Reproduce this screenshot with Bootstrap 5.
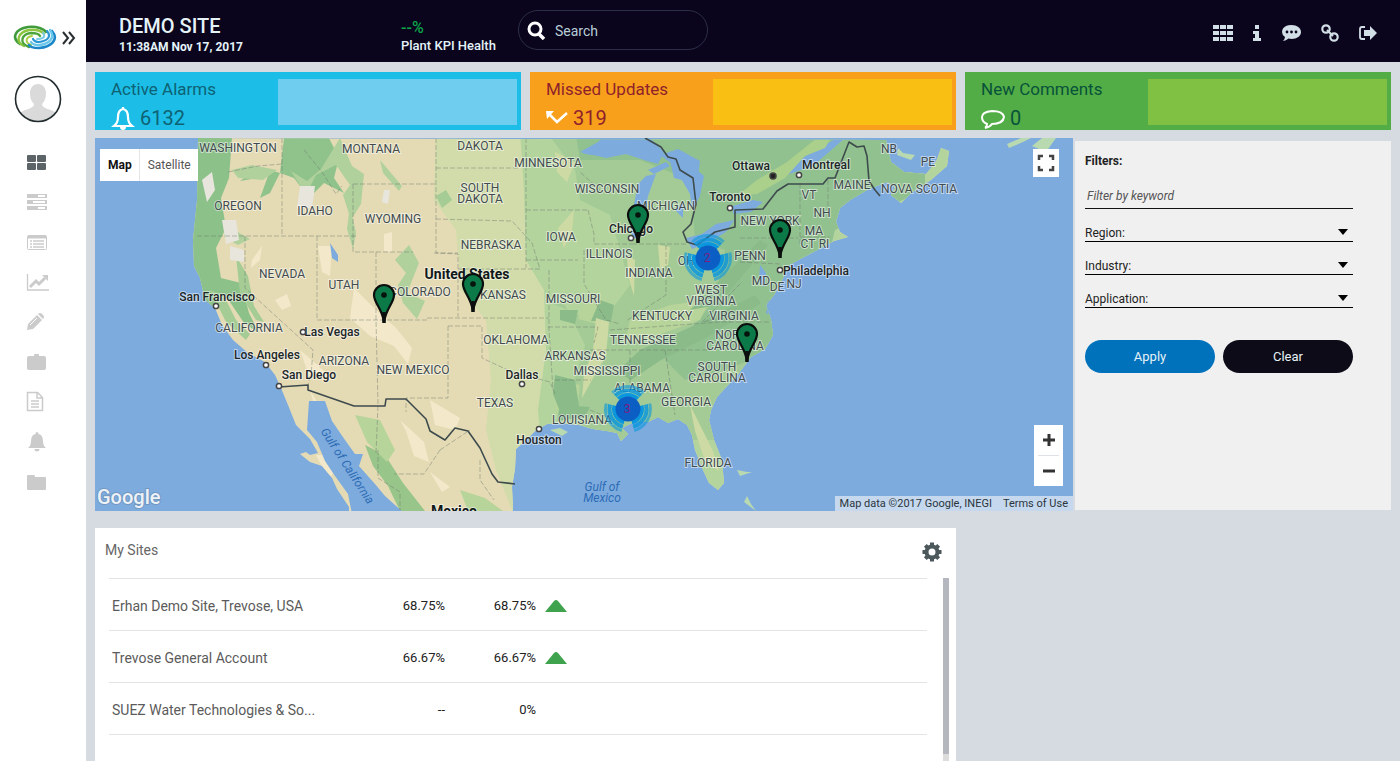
<!DOCTYPE html>
<html lang="en">
<head>
<meta charset="utf-8">
<meta name="viewport" content="width=device-width, initial-scale=1">
<title>Demo Site dashboard</title>
<link href="https://cdn.jsdelivr.net/npm/bootstrap@5.3.0/dist/css/bootstrap.min.css" rel="stylesheet">
<script src="https://cdn.jsdelivr.net/npm/bootstrap@5.3.0/dist/js/bootstrap.bundle.min.js" defer></script>
<style>
  body { font-family: Roboto, "Liberation Sans", sans-serif; font-size: 13px; line-height: 20px; background: #d5dbe0; color: #222; }
  svg { display: block; flex: none; }
  .side { width: 86px; background: #fff; }
  .brandbar { height: 75px; padding-left: 13px; gap: 5px; }
  .avatar { width: 48px; height: 48px; margin-left: 14px; margin-bottom: 19px; }
  .side-link { height: 40px; padding-left: 26px; color: #cbcbcb; }
  .side-link.active { color: #5d6468; }
  .topbar { height: 62px; background: #0a041c; color: #e4f3f8; font-weight: 500; }
  .site-block { width: 315px; padding: 10px 0 0 33px; }
  .site-name { font-size: 20px; line-height: 22px; }
  .site-sub { line-height: 20px; }
  .site-date { font-size: 12px; font-weight: 700; }
  .kpi-block { width: 117px; padding-top: 14px; }
  .kpi-value { font-size: 16px; line-height: 16px; color: #0aa54a; }
  .search { width: 190px; height: 40px; border: 1px solid #2b3048; padding-left: 8px; gap: 9px; margin-bottom: 3px; }
  .search input { font-size: 14px; color: #b9cfd8; margin-top: 3px; }
  .search input::placeholder { color: #b9cfd8; opacity: 1; }
  .top-icons { padding-right: 22px; color: #d3dfe6; gap: 18px; padding-top: 4px; }
  .content { padding: 10px 9px 0; }
  .tiles { display: grid; grid-template-columns: repeat(3, 1fr); gap: 9px; }
  .tile { height: 58px; }
  .tile-text { width: 43%; padding: 6px 0 0 16px; }
  .tile-title { font-size: 17px; line-height: 22px; }
  .tile-num { font-size: 20px; line-height: 24px; margin-top: 6px; gap: 5px; }
  .tile-box { margin: 7px 4px 5px 0; }
  .alarms { background: #1cbde7; color: #0e6273; } .alarms .tile-box { background: #6fcdef; }
  .missed { background: #f8a01c; color: #8f1f2b; } .missed .tile-box { background: #f9c013; }
  .comments { background: #53ad46; color: #07523a; } .comments .tile-box { background: #80c143; }
  .map-row { margin-top: 8px; gap: 2px; }
  .map-wrap { height: 373px; background: #7dabde; min-width: 0; }
  .map-svg { width: 100%; height: 100%; }
  .map-svg text { fill: #414b4e; stroke: #fff; stroke-opacity: .5; stroke-width: 2px; paint-order: stroke; font-size: 12px; text-anchor: middle; font-weight: 400; }
  .map-svg .city text { fill: #1d2628; font-size: 12px; font-weight: 500; }
  .map-svg .sea text { fill: #2d6cb5; stroke: none; font-style: italic; font-size: 12px; }
  .map-svg .country text { fill: #10181a; font-size: 14px; font-weight: 700; }
  .map-svg .count text { fill: #7a2080; stroke: none; font-size: 12px; }
  .map-svg .glogo { fill: #fff; fill-opacity: .9; stroke: #6d8fb4; stroke-opacity: .7; font-size: 20px; text-anchor: start; font-weight: 500; }
  .map-type { left: 5px; top: 11px; height: 32px; }
  .map-type button { background: #fff; border: 0; font-size: 12px; padding: 0 7px 0 8px; color: #555; }
  .map-type .active { font-weight: 700; color: #111; border-right: 1px solid #e5e5e5; }
  .map-btn { background: #fff; border: 0; padding: 0; display: flex; align-items: center; justify-content: center; }
  .map-full { right: 14px; top: 11px; width: 26px; height: 28px; }
  .map-zoom { right: 10px; bottom: 25px; width: 29px; background: #fff; }
  .map-zoom button { width: 29px; height: 30px; }
  .map-credit { right: 0; bottom: 0; height: 15px; line-height: 15px; background: #c5d8ee; font-size: 11px; gap: 11px; padding: 0 5px; color: #2b353c; }
  .map-credit a { color: inherit; text-decoration: none; }
  .filters { width: 316px; margin: 3px 0 1px; padding: 10px 38px 0 10px; background: #f0f0f0; font-size: 12px; }
  .filters .keyword { font-size: 12px; font-style: italic; border-bottom: 1px solid #111; padding: 0 2px 3px; margin-top: 14px; height: 24px; }
  .filters .keyword::placeholder { color: #555; opacity: 1; }
  .pick { height: 33px; border-bottom: 1px solid #000; padding-top: 14px; line-height: 20px; }
  .pick select { appearance: none; border: 0; height: 18px; background: url("data:image/svg+xml,%3Csvg xmlns='http://www.w3.org/2000/svg' width='10' height='6'%3E%3Cpath d='M0 0h10L5 6z' fill='%23000'/%3E%3C/svg%3E") no-repeat right 5px center; }
  .pill { height: 33px; border: 0; border-radius: 17px; color: #e6f1f6; font-size: 13px; }
  .pill-apply { background: #0072bc; } .pill-clear { background: #0d0b18; }
  .sites { grid-column: span 2; background: #fff; padding: 10px 7px 0 14px; }
  .lower { margin-top: 17px; }
  .sites h2 { font-size: 14px; line-height: 24px; color: #666; font-weight: 400; margin: 0 0 0 -4px; }
  .gear { margin-right: 7px; color: #4c585c; }
  .sites-head { height: 40px; }
  .site-table { border-top: 1px solid #e2e4e5; margin: 0; }
  .site-table td { height: 52px; padding: 2px 3px 0; border-bottom: 1px solid #e2e4e5; vertical-align: middle; }
  .site-table td:first-child { color: #5b5b5b; font-size: 14px; width: 248px; }
  .site-table .c-a { width: 91px; } .site-table .c-b { width: 91px; }
  .site-table td:last-child { padding-left: 5px; }
  .track { width: 6px; margin-left: 16px; background: #dcdcdc; }
  .thumb { height: 176px; background: #b4b7bd; }
</style>
</head>
<body>
<div class="d-flex min-vh-100">
  <nav class="side flex-shrink-0 d-flex flex-column" aria-label="Main">
    <div class="brandbar d-flex align-items-center">
      <svg width="44" height="26" viewBox="0 0 44 26" fill="none" stroke-linecap="round">
        <path d="M7 19C-2 13 2 4 15 2c9-1 16 2 18 5" stroke="#3f9b3b" stroke-width="2.600"/>
        <path d="M11 21C1 16 6 7 16 5c7-1 13 1 15 4" stroke="#8cc63f" stroke-width="2.400"/>
        <path d="M16 22C5 18 9 9 18 8c5 0 8 1 9 3" stroke="#4da53c" stroke-width="2.400"/>
        <path d="M18 20c-7-3-5-8 1-9" stroke="#a8cf45" stroke-width="2"/>
        <path d="M39 6c7 8 0 16-13 17-6 0-9-1-10-3" stroke="#1b87c9" stroke-width="2.600"/>
        <path d="M37 5c6 8-1 14-11 15-4 0-7-1-8-3" stroke="#6cc8ea" stroke-width="2.400"/>
        <path d="M34 6c5 6 0 10-8 11-3 0-5-1-6-3" stroke="#2a96d2" stroke-width="2.200"/>
        <path d="M30 8c3 4 0 6-6 6" stroke="#7ccbe8" stroke-width="2"/>
      </svg>
      <svg width="14" height="14" viewBox="0 0 14 14" fill="none" stroke="#2a2f31" stroke-width="2"><path d="M1 1l5 6-5 6M7 1l5 6-5 6"/></svg>
    </div>
    <svg class="avatar" viewBox="0 0 48 48"><defs><clipPath id="av"><circle cx="24" cy="24" r="22"/></clipPath></defs><g clip-path="url(#av)" fill="#dadada"><path d="M24 9c5 0 8 4 8 9 0 6-2 9-4 11 0 5 10 5 14 9v10H6V38c4-4 14-4 14-9-2-2-4-5-4-11 0-5 3-9 8-9z"/></g><circle cx="24" cy="24" r="22.500" fill="none" stroke="#222b2d" stroke-width="1.600"/></svg>
    <a href="#" class="side-link active d-flex align-items-center" aria-label="Dashboard"><svg width="21" height="20" fill="currentColor"><rect x="1" y="3" width="9" height="7" rx="1"/><rect x="11" y="3" width="9" height="7" rx="1"/><rect x="1" y="11" width="9" height="7" rx="1"/><rect x="11" y="11" width="9" height="7" rx="1"/></svg></a>
    <a href="#" class="side-link d-flex align-items-center" aria-label="Servers"><svg width="22" height="20"><g fill="currentColor"><rect x="1" y="2" width="20" height="4"/><rect x="1" y="8" width="20" height="4"/><rect x="1" y="14" width="20" height="4"/></g><g fill="#fff"><path d="M12 3h7v2h-7zM7 9h12v2H7zM12 15h7v2h-7z"/></g></svg></a>
    <a href="#" class="side-link d-flex align-items-center" aria-label="Lists"><svg width="22" height="20" fill="none" stroke="currentColor"><rect x="1.500" y="3.500" width="19" height="14" rx="1"/><path d="M2 5h18" stroke-width="3"/><path d="M4 9h2M4 12h2M4 15h2M7 9h11M7 12h11M7 15h11" stroke-width="1.300"/></svg></a>
    <a href="#" class="side-link d-flex align-items-center" aria-label="Charts"><svg width="24" height="20" fill="none" stroke="currentColor"><path d="M1.500 2v16H23" stroke-width="1.300"/><path d="M4 15l6-6 3 3 6-6" stroke-width="3"/><path d="M16 3h6v6z" fill="currentColor" stroke="none"/></svg></a>
    <a href="#" class="side-link d-flex align-items-center" aria-label="Edit"><svg width="20" height="20" fill="currentColor"><path d="M1 18l1-6L11 3l5 5-9 9zM12 2q2-2 4 0l1 1q2 2 0 4z"/><path d="M4 13l7-7" stroke="#fff"/></svg></a>
    <a href="#" class="side-link d-flex align-items-center" aria-label="Work"><svg width="22" height="20" fill="currentColor"><path d="M8 4V3q0-1 1-1h3q1 0 1 1v1h5q2 0 2 2v10q0 2-2 2H3q-2 0-2-2V6q0-2 2-2z"/></svg></a>
    <a href="#" class="side-link d-flex align-items-center" aria-label="Reports"><svg width="20" height="22" fill="none" stroke="currentColor" stroke-width="1.500"><path d="M1.500 1.500h10l5 5v13h-15zM11 2v5h5M5 10h8M5 13h8M5 16h8"/></svg></a>
    <a href="#" class="side-link d-flex align-items-center" aria-label="Alerts"><svg width="22" height="22" viewBox="0 0 22 22" fill="currentColor"><path d="M11 1q1.500 0 1.500 2Q17 4 17 10q0 5 3 7H2q3-2 3-7 0-6 4.500-7Q9.500 1 11 1zM8.500 18h5a2.500 2.500 0 0 1-5 0z"/></svg></a>
    <a href="#" class="side-link d-flex align-items-center" aria-label="Files"><svg width="22" height="20" fill="currentColor"><path d="M1 4q0-1 1-1h6q1 0 1 2h10q1 0 1 1v11q0 1-1 1H2q-1 0-1-1z"/></svg></a>
  </nav>

  <div class="flex-grow-1 d-flex flex-column" style="min-width:0">
    <header class="topbar d-flex align-items-center">
      <div class="site-block">
        <div class="site-name">DEMO SITE</div>
        <div class="site-sub site-date">11:38AM Nov 17, 2017</div>
      </div>
      <div class="kpi-block">
        <div class="kpi-value">--%</div>
        <div class="site-sub text-nowrap">Plant KPI Health</div>
      </div>
      <form class="search rounded-pill d-flex align-items-center" role="search">
        <svg width="19" height="20" fill="none" stroke="#fff"><circle cx="8" cy="9" r="6" stroke-width="3"/><path d="M12 14l5 5" stroke-width="3.500"/></svg>
        <input class="form-control-plaintext p-0" type="search" placeholder="Search" aria-label="Search">
      </form>
      <div class="top-icons d-flex align-items-center ms-auto">
        <a href="#" class="text-reset" aria-label="Apps"><svg width="20" height="16" fill="currentColor"><path d="M0 0h6v4H0zM7 0h6v4H7zM14 0h6v4h-6zM0 6h6v4H0zM7 6h6v4H7zM14 6h6v4h-6zM0 12h6v4H0zM7 12h6v4H7zM14 12h6v4h-6z"/></svg></a>
        <a href="#" class="text-reset" aria-label="Info"><svg width="12" height="16" fill="currentColor"><path d="M4 0h4v4H4zM2 6h6v7h2v3H2v-3h2V9H2z"/></svg></a>
        <a href="#" class="text-reset" aria-label="Comments"><svg width="21" height="18" viewBox="0 0 21 18"><path d="M10.500 1C16 1 20 4 20 8s-4 7-9.500 7q-1.500 0-3-.4Q5 17 2 17q2-2 2-4-3-2-3-5 0-4 4-6 2-1 5.500-1z" fill="currentColor"/><g fill="#0a041c"><circle cx="6" cy="8" r="1.400"/><circle cx="10.500" cy="8" r="1.400"/><circle cx="15" cy="8" r="1.400"/></g></svg></a>
        <a href="#" class="text-reset" aria-label="Links"><svg width="20" height="20" fill="none" stroke="currentColor" stroke-width="2.200"><circle cx="6" cy="6" r="3.700"/><circle cx="14" cy="14" r="3.700"/><path d="M7 7l6 6" stroke-width="2"/></svg></a>
        <a href="#" class="text-reset" aria-label="Sign out"><svg width="20" height="16" viewBox="0 0 20 16"><path d="M7 2H4Q2 2 2 4v8q0 2 2 2h3" fill="none" stroke="currentColor" stroke-width="1.800"/><path d="M6 5h6V1l7 7-7 7v-4H6z" fill="currentColor"/></svg></a>
      </div>
    </header>

    <main class="content flex-grow-1 d-flex flex-column">
      <div class="tiles">
        <section class="tile alarms d-flex">
          <div class="tile-text"><div class="tile-title">Active Alarms</div>
            <div class="tile-num d-flex align-items-center"><svg width="24" height="24" viewBox="0 0 24 24" fill="none" stroke="#fff" stroke-width="2.200"><path d="M12 3q5 1 5 8 0 6 4 9H3q4-3 4-9 0-7 5-8zM12 1v2"/><path d="M9 21h6q0 3-3 3t-3-3z" fill="#fff" stroke="none"/></svg><span>6132</span></div></div>
          <div class="tile-box flex-grow-1"></div>
        </section>
        <section class="tile missed d-flex">
          <div class="tile-text"><div class="tile-title">Missed Updates</div>
            <div class="tile-num d-flex align-items-center"><svg width="22" height="14" viewBox="0 0 22 14" fill="none" stroke="#fff" stroke-width="2.500"><path d="M3 3l8 8L21 2"/><path d="M0 0h8L1 8z" fill="#fff" stroke="none"/></svg><span>319</span></div></div>
          <div class="tile-box flex-grow-1"></div>
        </section>
        <section class="tile comments d-flex">
          <div class="tile-text"><div class="tile-title">New Comments</div>
            <div class="tile-num d-flex align-items-center"><svg width="24" height="22" viewBox="0 0 24 22" fill="none" stroke="#fff" stroke-width="2"><path d="M6 17q-5-2-5-7 0-5 10-6 11 0 12 6-1 7-12 7-2 3-7 4 2-1 2-4z"/></svg><span>0</span></div></div>
          <div class="tile-box flex-grow-1"></div>
        </section>
      </div>

      <div class="map-row d-flex">
        <div class="map-wrap flex-grow-1 position-relative overflow-hidden">
          <svg class="map-svg" viewBox="95 138 978 373" preserveAspectRatio="xMidYMid slice" role="img" aria-label="Map of plant sites">
            <defs>
              <clipPath id="land"><path d="M198 138l-1 62-4 40 1 26 6 12 5 22 10 8 7 17 11 15 15 13 17 9 10 13 6 13 7 17 8 20 14 14 8 14-8 2-4-3-6 2 10 8 12 4 10 12 5 11 12 18V520H513V507l-1-20 3-18 1-20 9-8 10-10 12-7 16-1 16 2 14 4 14 2 10 2 4 8 7-7-6-6 12-6h14l10-5 10 6 10-4 9 6 5 10 3 15 8 20 6 13 9 7 6-7-2-23-8-20-5-20 2-10 6-13 11-12 11-12 12-16 14-8 8-14-2-15-5-15 8-10 8-15 7-15 15-8 15-8 15-8 14-4-8-5-4-10 4-14 10-8 17-10 20-8 8 5-4 8 10 8 10-10 20-13 16-14 2-15-8-3-5 14-10 12-22-2-13-10-3-12-2-10z"/></clipPath>
              <g id="pin"><path d="M0 0C-2-14-10-19-10-27a10 10 0 0 1 20 0C10-19 2-14 0 0z" fill="#0b7a48" stroke="#0a0e0c" stroke-width="2.200"/><path d="M0 1v-11" stroke="#0a0e0c" stroke-width="3.500"/><circle cy="-27" r="2.800" fill="#06120c"/></g>
              <g id="cluster"><g fill="none" stroke="#0a97dd" stroke-width="4" stroke-dasharray="88 32" transform="rotate(-134)"><circle r="14" pathLength="360"/><circle r="18.500" pathLength="360" stroke-opacity=".85"/><circle r="22.500" pathLength="360" stroke-opacity=".6" stroke-width="3"/></g><circle r="12.500" fill="#0b5fc4"/></g>
            </defs>
            <g clip-path="url(#land)">
              <rect x="90" y="130" width="990" height="390" fill="#e4dbb5"/>
              <path d="M436 130l-2 70 22 30 5 60 25 30 5 60-5 50 10 40 20 50h60V130z" fill="#d1dcaa"/>
              <path d="M520 130l4 60 2 70 18 30 2 60-8 60 10 110H1000V130z" fill="#b3d49d"/>
              <path d="M545 300l20 5 20 40-15 50 10 45h250V300L790 240l80-50 100-60H545l30 40 5 30 30 15 20 70-30 40z" fill="#a4cb96"/>
              <path d="M575 130h350v60l-90 40-10 40-40 30-10 50-50 20-40 10-20-20 50-60 10-50-30-10-5-60-50-20-60 0z" fill="#92c190"/>
              <path d="M192 138h40l-3 40-8 20 5 30-10 20 5 30 20 5 8 30 10 20-15-10-20-30-12 20-20-20z" fill="#8cc18a"/>
              <path d="M284 138h45l10 20-5 20 10 15-20-10-15 15-15-20-14-5-10 20-10 5 8-22-28 5 20-14 20 6z" fill="#8fc38b"/>
              <path d="M232 170l20-5 25 5-14 10-25-2zM340 138l12 28 12 8-3 30-10 16-8-25 7-10-14-20-20 10-10 20-15-24 16 10 14-12zM225 225l25 14-12 6-14-8zM350 205l6 28-3 16-6-20zM395 260l14-15 10 18-12 30 18 8-8 18-14-16-5-18 8-12zM380 160l22 26-3 5-16-18z" fill="#b0d09c"/>
              <path d="M210 290l14 6 12 24 14 14-4 6-20-18zM236 256l12 20 6 30 10 16-8-2-16-26zM436 196l10-6 6 10-10 8z" fill="#a4cc94"/>
              <path d="M365 445l20 10 18 28 22 28h-25l-12-25-15-20z" fill="#98c58a"/>
              <path d="M355 415l25 5 15 30-8 12-20-20zM460 490l25 8 18 13h-35zM560 380l20 5-3 24-22 2zM585 300l16 4-3 20-20-5zM630 320l40-15 40-5-10 20-50 18-25 5z" fill="#b7d49a"/>
              <path d="M555 375l20 5 4 26-18 8-8-20zM600 300l14 5-3 16-20 0zM560 310l18 0-3 14-15-4zM560 405l30 2-5 10-28 4zM640 350l55-25 60-30 6 8-55 35-45 22-30 20-14-8zM690 310l70-70 8 5-50 60z" fill="#8abb89"/>
              <path d="M300 186l15 0-3 22-15 0zM202 180l10-8 3 18-8 12zM222 220l14 0 3 20-13 4zM230 246l14 4 0 12-14-2zM384 190l6 0-2 14-6-2z" fill="#e8e6dc"/>
              <path d="M318 246l14 0-2 30-8-4zM252 260l10-14-2 14-9 8zM354 288l18 18 24 22 16 20-4 16-14-18-24-10-20-18zM275 300l12-6 4 12-9 4zM384 234l8-2 0 20-8-1zM310 390l12 20 2 16-8-14zM430 400l30 18-5 12-20-5zM400 420l24 22 5 20-15-6-8-25zM325 405l8 20 14 18 6 14-18-20zM316 455l12 0 7 12-4 10-10-12zM430 472l20 15-8 5zM300 350l14 12 20 18-25-4z" fill="#f3e9ca"/>
              <path d="M596 318l13 4-3 34-14 24-10 18 2-24 9-24zM658 245l12 2-2 18-8 4zM558 228l16-18-2 22-8 16zM555 152l20 10-8 20-10-10zM627 255l8 5-1 36-6-20zM690 405l8 16 15 30 6 20-14-10-10-30z" fill="#cedaa4"/>
              <g fill="#7dabde">
                <path d="M309 401l16 0 7 20 13 19 10 14 8 0-4 12 16 18 10 12 20 18H352l-4-20-13-18-10-15-8-19-10-12z"/>
                <path d="M580 152l18-10 4-4h48l14 14-6 12-14-4-18-6-20 4-8-2-12-2zM660 155l18-6 22 12-2 15-12 10-14-22z"/>
                <path d="M638 184l8-8 10-2-8 22-4 22-4 20-8 0-1-18zM670 160l20 4 14 12-4 20-8 14-2-16-8-14-8-2zM686 238l16-4 14-10 18-4-8 12-20 12-14 5zM733 206l20-6 10 2-12 10-18 2zM648 170l18-8 4 4-16 8zM675 210l8-8 0 16zM773 180l14-14 26-14 24-14h8l-32 28-30 10z"/>
                <path d="M330 243l8 12 0 7-6-4zM760 265l6 8-2 14-5-6zM768 300l6 12-8 2z"/>
              </g>
              <path d="M785 178l20-22 20-8 6-10-14 0-30 24-30 18-20 16 20-2z" fill="#abd08c"/>
              <g fill="none" stroke="#6d766c" stroke-opacity=".45" stroke-dasharray="5 2">
                <path d="M228 172l30-6 24-2M282 138v98M197 236h160M245 236v52l68 62-2 26M317 236v84h110M353 184h84M353 184v68h60M436 138v115l22 1v63M376 252v68l2 84-2 50M434 253h24M436 168h84M436 219l76 2 20 22 8 26h-82M427 318h122M448 326v72h-42v14M448 326h34v32l30 14 38 10 5 12M526 138v130M526 210h62M526 260h52M549 270v60l4 60M548 327h50l-4 16M588 210l6 24 0 10h38M584 250v34l22 36 14 4M600 190l-20-18M632 244h56M666 245v50l-40 26M610 330l110-8 50 0M590 350h120M630 350v66M665 350l10 65M555 380h36M590 410l30 12M800 183v62M828 180v30M800 237h30M740 238h58M740 262l40 2M750 312l-48 10 40-40M310 376l-2 10M378 450v28l22 14 0 18M440 450l-16 24h-30M440 450l30-20M480 460l0 20 14 20"/>
                <path d="M304 150l18 22 14 22 6-8"/>
              </g>
            </g>
            <path d="M898 148l5 5 12 2-4 5-14-5zM1009 148l14-6 8-4-10 0-14 6zM1032 146l10-8h14l-10 14zM737 470l10 2 5 0-12 4zM744 502l3-6 4 8 5 7zM550 430l10-2 8 4-6 4z" fill="#b9d9b0"/>
            <g fill="none" stroke="#3e4b4d" stroke-width="1.600" stroke-linejoin="round">
              <path d="M645 138l16 9 7 10 8 2 4 11 13 8 3 26-5 20-8 8 4 10 10 3 18-13 20-5v-17l28-1 14-18 11-7h35l5-6 7 0 14-36 8 5 7-1 3 10 2 25 6 9 5 6"/>
              <path d="M279 387l29-2v5l46 16h31l1-7h20l20 20 4 12 15 9 10-12 13 3 12 17 12 26 6 8 17 2"/>
            </g>
            <g>
              <text x="238" y="152">WASHINGTON</text><text x="371" y="153">MONTANA</text><text x="480" y="150">DAKOTA</text><text x="548" y="167">MINNESOTA</text>
              <text x="238" y="210">OREGON</text><text x="315" y="215">IDAHO</text><text x="393" y="223">WYOMING</text><text x="480" y="192">SOUTH</text><text x="480" y="203">DAKOTA</text>
              <text x="607" y="193">WISCONSIN</text><text x="666" y="210">MICHIGAN</text><text x="561" y="241">IOWA</text><text x="491" y="249">NEBRASKA</text><text x="609" y="258">ILLINOIS</text>
              <text x="649" y="277">INDIANA</text><text x="282" y="278">NEVADA</text><text x="344" y="289">UTAH</text><text x="420" y="296">COLORADO</text><text x="503" y="299">KANSAS</text><text x="573" y="303">MISSOURI</text>
              <text x="249" y="332">CALIFORNIA</text><text x="344" y="365">ARIZONA</text><text x="413" y="374">NEW MEXICO</text><text x="516" y="344">OKLAHOMA</text><text x="575" y="360">ARKANSAS</text>
              <text x="662" y="320">KENTUCKY</text><text x="734" y="320">VIRGINIA</text><text x="643" y="344">TENNESSEE</text><text x="607" y="375">MISSISSIPPI</text><text x="642" y="392">ALABAMA</text><text x="686" y="406">GEORGIA</text>
              <text x="495" y="407">TEXAS</text><text x="582" y="424">LOUISIANA</text><text x="708" y="467">FLORIDA</text><text x="711" y="294">WEST</text><text x="711" y="305">VIRGINIA</text><text x="735" y="339">NORTH</text><text x="735" y="350">CAROLINA</text>
              <text x="717" y="371">SOUTH</text><text x="717" y="382">CAROLINA</text><text x="692" y="265">OHIO</text><text x="750" y="260">PENN</text><text x="770" y="225">NEW YORK</text><text x="809" y="199">VT</text><text x="822" y="217">NH</text><text x="814" y="235">MA</text><text x="808" y="248">CT</text><text x="824" y="248">RI</text>
              <text x="761" y="285">MD</text><text x="777" y="291">DE</text><text x="794" y="288">NJ</text><text x="852" y="189">MAINE</text><text x="889" y="153">NB</text><text x="928" y="166">PE</text><text x="919" y="193">NOVA SCOTIA</text>
            </g>
            <g class="city">
              <text x="217" y="301">San Francisco</text><text x="332" y="336">Las Vegas</text><text x="267" y="359">Los Angeles</text><text x="309" y="379">San Diego</text><text x="522" y="379">Dallas</text><text x="539" y="444">Houston</text>
              <text x="631" y="233">Chicago</text><text x="730" y="201">Toronto</text><text x="751" y="170">Ottawa</text><text x="826" y="169">Montreal</text><text x="816" y="275">Philadelphia</text>
              <g fill="#fff" stroke="#444" stroke-width="1.500"><circle cx="216" cy="306" r="2.600"/><circle cx="303" cy="332" r="2.600"/><circle cx="266" cy="365" r="2.600"/><circle cx="279" cy="386" r="2.600"/><circle cx="522" cy="384" r="2.600"/><circle cx="539" cy="429" r="2.600"/><circle cx="631" cy="238" r="2.600"/><circle cx="730" cy="208" r="2.600"/><circle cx="799" cy="175" r="2.600"/><circle cx="780" cy="270" r="2.600"/><circle cx="773" cy="176" r="3" fill="#222"/></g>
            </g>
            <g class="sea"><text x="602" y="491">Gulf of</text><text x="602" y="502">Mexico</text><text transform="translate(344 468) rotate(57)">Gulf of California</text></g>
            <g class="country"><text x="467" y="279">United States</text><text x="454" y="516">Mexico</text></g>
            <use href="#cluster" x="708" y="258"/><use href="#cluster" x="628" y="409"/>
            <g class="count"><text x="707" y="262">2</text><text x="627" y="413">3</text></g>
            <use href="#pin" x="638" y="242"/><use href="#pin" x="780" y="257"/><use href="#pin" x="473" y="311"/><use href="#pin" x="384" y="322"/><use href="#pin" x="747" y="361"/>
            <text class="glogo" x="97" y="504">Google</text>
          </svg>
          <div class="map-type position-absolute d-flex"><button class="active" type="button">Map</button><button type="button">Satellite</button></div>
          <button class="map-btn map-full position-absolute" type="button" aria-label="Full screen"><svg width="18" height="18" fill="none" stroke="#444" stroke-width="2.500"><path d="M2 6V2h4M12 2h4v4M16 12v4h-4M6 16H2v-4"/></svg></button>
          <div class="map-zoom position-absolute">
            <button class="map-btn" type="button" aria-label="Zoom in"><svg width="12" height="12" stroke="#333" stroke-width="3"><path d="M6 0v12M0 6h12"/></svg></button>
            <div class="border-top mx-1"></div>
            <button class="map-btn" type="button" aria-label="Zoom out"><svg width="12" height="12" stroke="#333" stroke-width="3"><path d="M0 6h12"/></svg></button>
          </div>
          <div class="map-credit position-absolute d-flex"><span>Map data ©2017 Google, INEGI</span><a href="#">Terms of Use</a></div>
        </div>
        <form class="filters flex-shrink-0">
          <div class="fw-bold">Filters:</div>
          <input class="keyword form-control-plaintext" type="text" placeholder="Filter by keyword" aria-label="Filter by keyword">
          <div class="pick d-flex"><label for="region">Region:</label><select id="region" class="flex-grow-1"><option></option></select></div>
          <div class="pick d-flex"><label for="industry">Industry:</label><select id="industry" class="flex-grow-1"><option></option></select></div>
          <div class="pick d-flex"><label for="application">Application:</label><select id="application" class="flex-grow-1"><option></option></select></div>
          <div class="d-flex gap-2 mt-4 pt-2">
            <button class="pill pill-apply flex-fill w-50" type="button">Apply</button>
            <button class="pill pill-clear flex-fill w-50" type="reset">Clear</button>
          </div>
        </form>
      </div>

      <div class="tiles lower flex-grow-1">
        <section class="sites d-flex flex-column">
          <div class="sites-head d-flex justify-content-between align-items-start">
            <h2>My Sites</h2>
            <button type="button" class="gear btn p-0 border-0 mt-1" aria-label="Settings"><svg width="20" height="20" viewBox="-10 -10 20 20" fill="none" stroke="currentColor"><circle r="5.500" stroke-width="4"/><path stroke-width="4" d="M0-9.500v3M0 6.500v3M-9.500 0h3M6.500 0h3M-6.700-6.700l2 2M4.700 4.700l2 2M-6.700 6.700l2-2M4.700-4.700l2-2"/></svg></button>
          </div>
          <div class="d-flex flex-grow-1">
            <div class="flex-grow-1">
              <table class="site-table w-100">
                <tbody>
                  <tr><td>Erhan Demo Site, Trevose, USA</td><td class="c-a text-end">68.75%</td><td class="c-b text-end">68.75%</td><td><svg width="24" height="14" fill="#3fa34d"><path d="M1 13L10 2q2-2 4 0l9 11z"/></svg></td></tr>
                  <tr><td>Trevose General Account</td><td class="c-a text-end">66.67%</td><td class="c-b text-end">66.67%</td><td><svg width="24" height="14" fill="#3fa34d"><path d="M1 13L10 2q2-2 4 0l9 11z"/></svg></td></tr>
                  <tr><td>SUEZ Water Technologies &amp; So...</td><td class="c-a text-end">--</td><td class="c-b text-end">0%</td><td></td></tr>
                </tbody>
              </table>
            </div>
            <div class="track flex-shrink-0"><div class="thumb"></div></div>
          </div>
        </section>
      </div>
    </main>
  </div>
</div>
</body>
</html>
